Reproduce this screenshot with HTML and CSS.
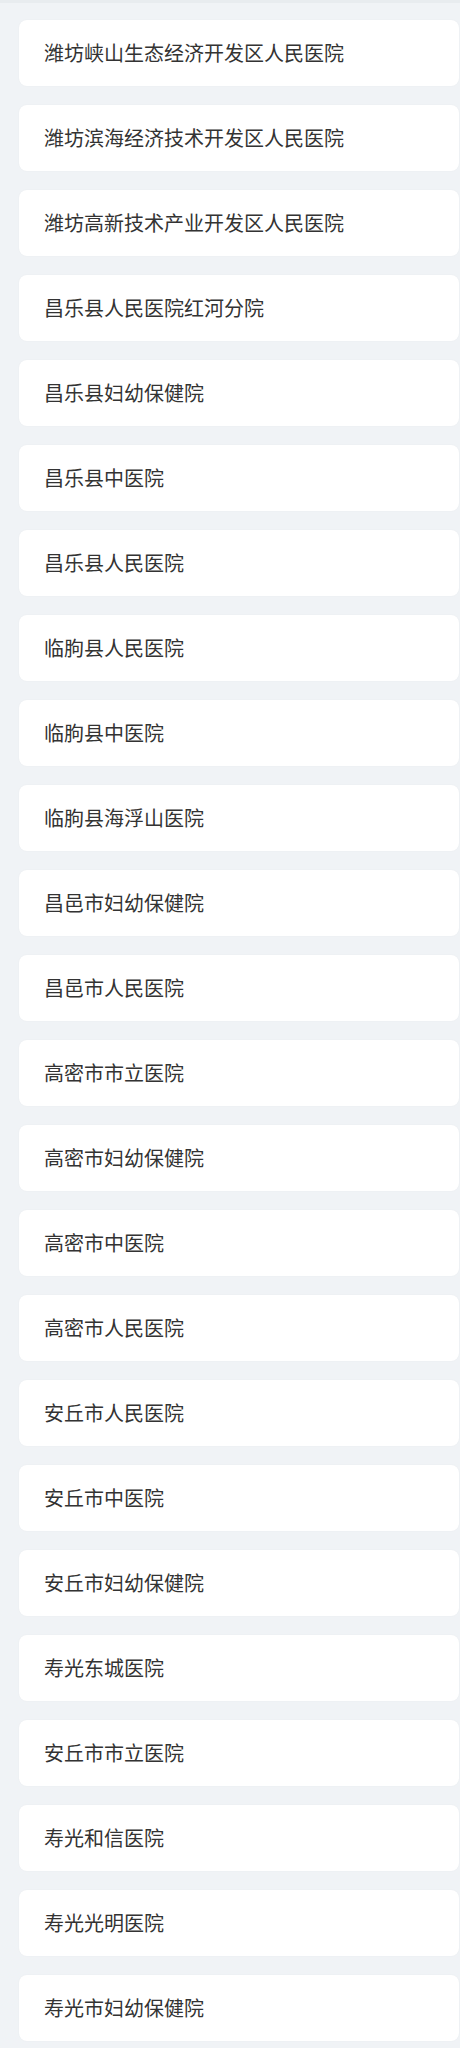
FILE: index.html
```html
<!DOCTYPE html>
<html lang="zh">
<head>
<meta charset="utf-8">
<link rel="stylesheet" href="styles.css">
</head>
<body>
<div class="topbar"></div>
<ul class="list">
<li class="card">潍坊峡山生态经济开发区人民医院</li>
<li class="card">潍坊滨海经济技术开发区人民医院</li>
<li class="card">潍坊高新技术产业开发区人民医院</li>
<li class="card">昌乐县人民医院红河分院</li>
<li class="card">昌乐县妇幼保健院</li>
<li class="card">昌乐县中医院</li>
<li class="card">昌乐县人民医院</li>
<li class="card">临朐县人民医院</li>
<li class="card">临朐县中医院</li>
<li class="card">临朐县海浮山医院</li>
<li class="card">昌邑市妇幼保健院</li>
<li class="card">昌邑市人民医院</li>
<li class="card">高密市市立医院</li>
<li class="card">高密市妇幼保健院</li>
<li class="card">高密市中医院</li>
<li class="card">高密市人民医院</li>
<li class="card">安丘市人民医院</li>
<li class="card">安丘市中医院</li>
<li class="card">安丘市妇幼保健院</li>
<li class="card">寿光东城医院</li>
<li class="card">安丘市市立医院</li>
<li class="card">寿光和信医院</li>
<li class="card">寿光光明医院</li>
<li class="card">寿光市妇幼保健院</li>
</ul>
</body>
</html>
```
FILE: styles.css
```css
html, body {
  margin: 0;
  padding: 0;
  background: #f0f3f6;
}
body {
  font-family: "Noto Sans CJK SC", "Noto Sans", sans-serif;
}
.topbar {
  height: 3px;
  background: #e8ecef;
}
.list {
  list-style: none;
  margin: 0;
  padding: 17px 1px 7px 19px;
  display: flex;
  flex-direction: column;
  gap: 19px;
}
.card {
  height: 66px;
  box-sizing: border-box;
  background: #ffffff;
  border-radius: 8px;
  box-shadow: 0 0 2px rgba(0, 0, 0, 0.04);
  display: flex;
  align-items: center;
  padding-left: 25px;
  font-size: 20px;
  color: #333333;
  line-height: 1;
}
```
